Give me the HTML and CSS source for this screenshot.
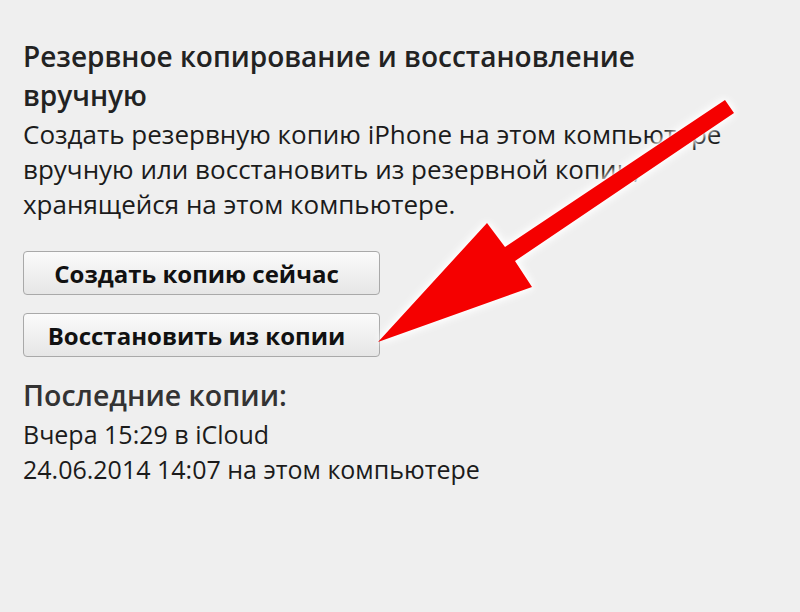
FILE: index.html
```html
<!DOCTYPE html>
<html lang="ru">
<head>
	<meta charset="UTF-8">
	<title>Резервные копии</title>
	<link rel="stylesheet" href="styles.css">
</head>
<body>
	<div class="panel">
		<h2 class="title">Резервное копирование и восстановление<br>вручную</h2>
		<p class="desc">Создать резервную копию iPhone на этом компьютере<br>вручную или восстановить из резервной копии,<br>хранящейся на этом компьютере.</p>
		<div class="actions">
			<button class="btn">Создать копию сейчас</button>
			<button class="btn">Восстановить из копии</button>
		</div>
		<h3 class="latest-title">Последние копии:</h3>
		<ul class="latest">
			<li>Вчера 15:29 в iCloud</li>
			<li>24.06.2014 14:07 на этом компьютере</li>
		</ul>
	</div>
	<!-- красная стрелка поверх панели -->
	<svg class="pointer" width="800" height="612" viewBox="0 0 800 612">
		<polygon points="725,100 734,113 515,261 532,287 378,342 487,223 505,247" fill="#f50000"/>
	</svg>
</body>
</html>
```

FILE: styles.css
```css
*{
	margin:0;
	padding:0;
}
body{
	background:#efefef;
	font-family:"Open Sans","Noto Sans",sans-serif;
	color:#1b1b1b;
	width:800px;
	height:612px;
	overflow:hidden;
	position:relative;
}
.panel{
	padding:37px 0 0 23px;
}
.title{
	font-size:28px;
	font-weight:600;
	line-height:39px;
	color:#222;
}
.desc{
	font-size:26px;
	line-height:35px;
	margin-top:2px;
}
.actions{
	display:flex;
	flex-direction:column;
	gap:18px;
	margin-top:29px;
	width:357px;
}
.btn{
	height:44px;
	padding-right:10px;
	border:1px solid #a9a9a9;
	border-radius:4px;
	background:linear-gradient(#fbfbfb,#e6e6e6);
	font-family:inherit;
	font-size:24px;
	font-weight:700;
	color:#111;
	cursor:pointer;
}
.latest-title{
	font-size:28.5px;
	font-weight:600;
	color:#333;
	margin-top:20px;
	line-height:36px;
}
.latest{
	list-style:none;
	font-size:25px;
	line-height:35px;
	margin-top:4px;
}
.pointer{
	position:absolute;
	left:0;
	top:0;
	filter:drop-shadow(0 0 3px #fff) drop-shadow(0 0 5px #fff);
}
```
